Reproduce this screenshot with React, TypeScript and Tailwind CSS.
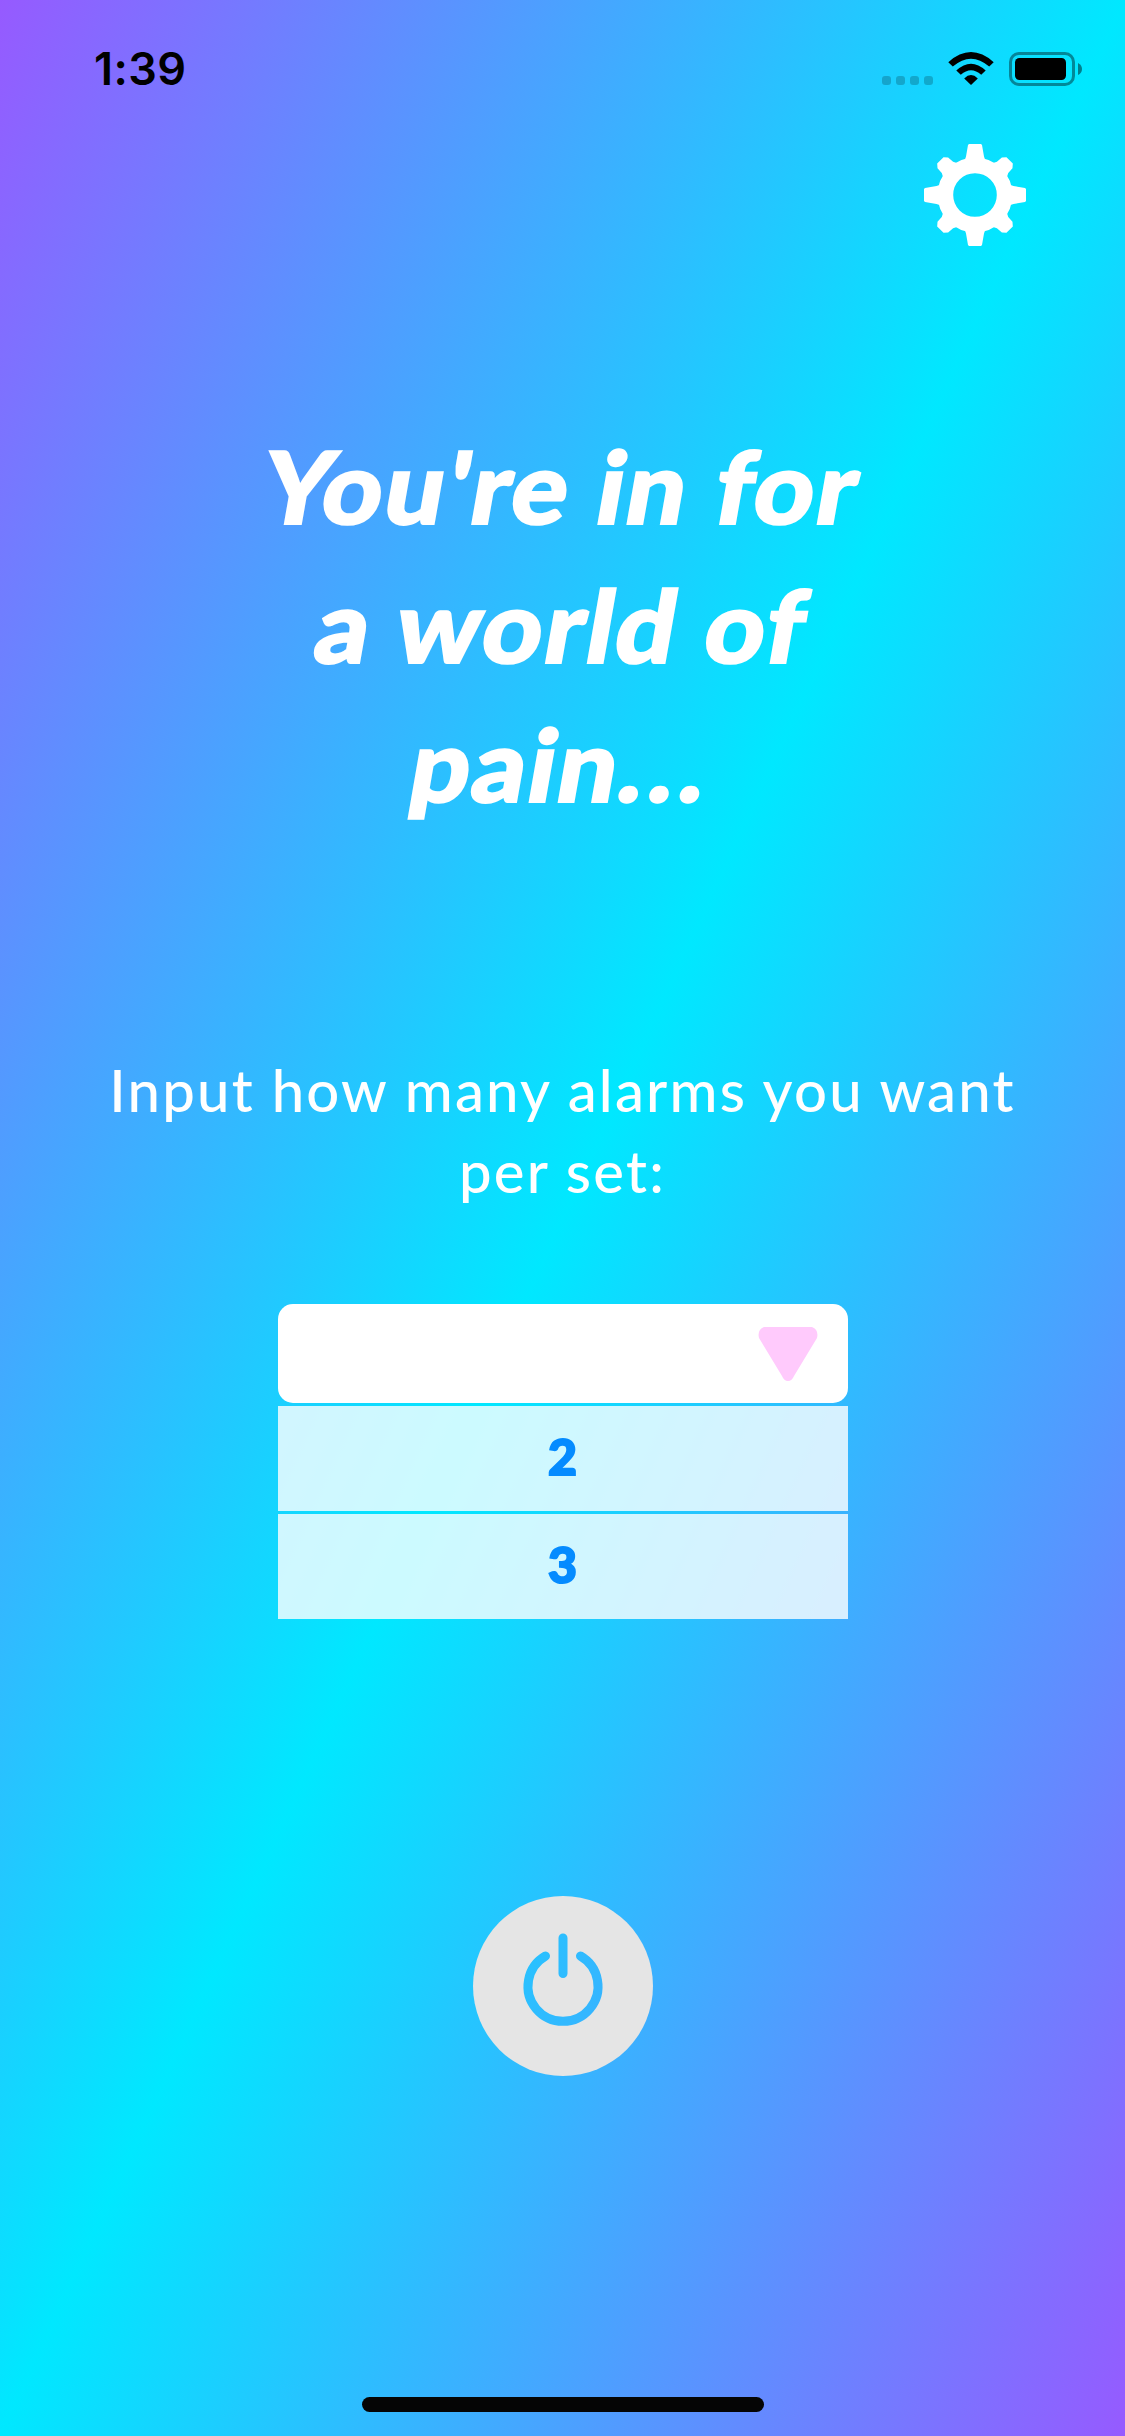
import React from "react";

function StatusBar() {
  return (
    <div className="flex h-[102px] w-full shrink-0 pl-[94px] pr-[43px] text-black">
      <div className="pt-[44px] font-['Inter'] text-[45px] font-semibold leading-[50px] tracking-[0.4px]">1:39</div>
      <div className="ml-auto flex pt-[52px]">
        <div className="mt-[24px] flex h-[9px] gap-[5px]">
          {[0, 1, 2, 3].map((i) => (
            <span key={i} className="h-[9px] w-[9px] rounded-[3px] bg-black/20" />
          ))}
        </div>
        <svg className="ml-[15px] h-[33px] w-[46px]" viewBox="0 0 46 33">
          <path d="M0.3 10.2 Q23 -10 45.7 10.2 L41.2 14.6 Q23 -1.2 4.8 14.6Z" />
          <path d="M8.3 18.5 Q23 4.8 37.7 18.5 L33.2 22.8 Q23 13.8 12.8 22.8Z" />
          <path d="M16.2 26.4 Q23 19.6 29.8 26.4 L23 33Z" />
        </svg>
        <svg className="ml-[15px] h-[34px] w-[73px]" viewBox="0 0 73 34">
          <rect x="1.5" y="1.5" width="63" height="31" rx="8.5" fill="none" stroke="#000" strokeOpacity=".4" strokeWidth="3" />
          <rect x="6" y="6" width="51" height="22" rx="4.5" />
          <path d="M69 11q4 2 4 6t-4 6z" fillOpacity=".45" />
        </svg>
      </div>
    </div>
  );
}

const teeth = [0, 45, 90, 135, 180, 225, 270, 315];

function Gear() {
  return (
    <button aria-label="Settings" className="mr-[99px] mt-[42px] self-end">
      <svg className="h-[102px] w-[102px]" viewBox="-51 -51 102 102" fill="#fff">
        <circle r="29.6" fill="none" stroke="#fff" strokeWidth="15.6" />
        {teeth.map((a) => (
          <path
            key={a}
            transform={`rotate(${a})`}
            d={a % 90 === 0
              ? "M-10.500 -34 L-9 -38.500 L-7 -50 L-6 -51 H6 L7 -50 L9 -38.500 L10.500 -34Z"
              : "M-10.500 -34 L-8 -39 L-7.500 -45.500 L-4.500 -49 H4.500 L7.500 -45.500 L8 -39 L10.500 -34Z"}
          />
        ))}
      </svg>
    </button>
  );
}

export default function App() {
  return (
    <main className="flex h-[2436px] w-[1125px] flex-col items-center overflow-hidden bg-[linear-gradient(to_bottom_right,#965aff_0%,#00e8ff_50%,#965aff_100%)]">
      <StatusBar />
      <Gear />
      <h1 className="mt-[170px] whitespace-nowrap text-center font-['Lato'] text-[100px] font-black leading-[139px] tracking-[2.2px] text-white [-webkit-text-stroke:2.2px_white]">
        <span className="block scale-x-[1.045] skew-x-[-9.5deg]">You're in for</span>
        <span className="block scale-x-[1.045] skew-x-[-9.5deg]">a world of</span>
        <span className="block scale-x-[1.045] skew-x-[-9.5deg]">pain<span className="tracking-[5.5px]">...</span></span>
      </h1>
      <p className="mt-[216px] whitespace-nowrap text-center font-['Lato'] text-[58px] font-medium leading-[81px] tracking-[2.2px] text-white">
        <span className="block">Input how many alarms you want</span>
        <span className="block">per set:</span>
      </p>
      <div className="mt-[93px] flex w-[570px] flex-col gap-[3px]">
        <div className="flex h-[99px] justify-end rounded-[15px] bg-white pr-[30px] pt-[23px]">
          <svg className="h-[54px] w-[60px]" viewBox="0 0 60 54">
            <path d="M6 0H54Q61 3 59 11L36 49Q34 54 30 54T24 49L1 11Q-1 3 6 0Z" fill="#ffcafc" />
          </svg>
        </div>
        {["2", "3"].map((n) => (
          <div key={n} className="flex h-[105px] items-center justify-center bg-white/80 pb-[5px] font-['Lato'] text-[50px] font-black text-[#058bff] [-webkit-text-stroke:2px_#058bff]">{n}</div>
        ))}
      </div>
      <button aria-label="Power" className="mt-[277px]">
        <svg className="h-[180px] w-[180px]" viewBox="0 0 180 180">
          <mask id="power">
            <rect width="180" height="180" fill="#fff" />
            <path d="M90 42V77.500M72.500 60A35 35 0 1 0 107.500 60" fill="none" stroke="#000" strokeWidth="9" strokeLinecap="round" />
          </mask>
          <circle cx="90" cy="90" r="90" fill="#e5e5e5" mask="url(#power)" />
        </svg>
      </button>
      <div className="mb-[24px] mt-auto h-[15px] w-[402px] rounded-full bg-[#050505]" />
    </main>
  );
}
